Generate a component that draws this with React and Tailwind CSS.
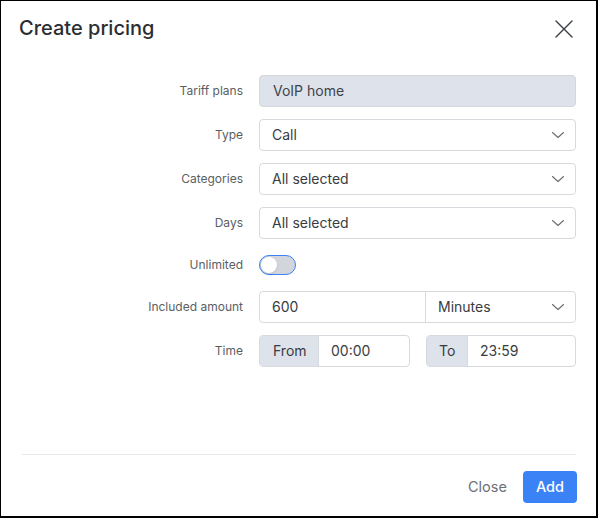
import React from 'react';

const Chevron = () => (
    <svg width="14" height="14" viewBox="0 0 14 14" fill="none" className="shrink-0">
        <path d="M1.5 4.5 L7 9.5 L12.5 4.5" stroke="#6a6e74" strokeWidth="1.1" strokeLinecap="round" strokeLinejoin="round" />
    </svg>
);

const Row = ({ label, children }) => (
    <div className="flex items-center gap-4">
        <div className="w-[222px] text-right text-xs text-[#5a5e63]">{label}</div>
        <div className="flex-1">{children}</div>
    </div>
);

const Select = ({ value }) => (
    <div className="flex h-8 items-center justify-between rounded border border-[#d6dade] bg-white pl-3 pr-[10px] text-sm text-[#383c42]">
        <span>{value}</span>
        <Chevron />
    </div>
);

const App = () => {
    return (
        <div className="h-[518px] w-[598px] border-l border-t border-r-2 border-b-2 border-black bg-white font-[Inter,sans-serif]">
            <div className="flex h-full flex-col px-5">
                {/* header */}
                <div className="flex items-center justify-between pt-[13px]">
                    <h2 className="-ml-[2px] text-[20px] leading-7 font-medium text-[#2a2e33]">Create pricing</h2>
                    <svg width="18" height="18" viewBox="0 0 18 18" className="mr-[3px] mt-[1px]">
                        <path d="M1 1 L17 17 M17 1 L1 17" stroke="#3b3f44" strokeWidth="1.4" strokeLinecap="round" />
                    </svg>
                </div>

                {/* form */}
                <div className="mt-[33px] flex flex-col gap-3">
                    <Row label="Tariff plans">
                        <div className="flex h-8 items-center rounded border border-[#d3d7dc] bg-[#dee2ea] px-[13px] text-sm text-[#40444a]">
                            VoIP home
                        </div>
                    </Row>
                    <Row label="Type">
                        <Select value="Call" />
                    </Row>
                    <Row label="Categories">
                        <Select value="All selected" />
                    </Row>
                    <Row label="Days">
                        <Select value="All selected" />
                    </Row>
                    <div className="flex h-7 items-center gap-4">
                        <div className="w-[222px] text-right text-xs text-[#5a5e63]">Unlimited</div>
                        <div className="flex h-5 w-[37px] items-center rounded-full border border-[#3b82f6] bg-[#d2d6dc] p-[1px]">
                            <div className="h-4 w-4 rounded-full bg-white shadow-sm" />
                        </div>
                    </div>
                    <Row label="Included amount">
                        <div className="flex h-8 rounded border border-[#d6dade] text-sm text-[#383c42]">
                            <div className="flex w-[166px] items-center border-r border-[#d6dade] pl-3">600</div>
                            <div className="flex flex-1 items-center justify-between pl-3 pr-[10px]">
                                <span>Minutes</span>
                                <Chevron />
                            </div>
                        </div>
                    </Row>
                    <Row label="Time">
                        <div className="flex gap-4 text-sm text-[#383c42]">
                            <div className="flex h-8 w-[151px] rounded border border-[#d6dade]">
                                <div className="flex w-[59px] items-center border-r border-[#d6dade] bg-[#dee2ea] pl-[13px]">From</div>
                                <div className="flex flex-1 items-center pl-3">00:00</div>
                            </div>
                            <div className="flex h-8 flex-1 rounded border border-[#d6dade]">
                                <div className="flex w-[41px] items-center border-r border-[#d6dade] bg-[#dee2ea] pl-[12px]">To</div>
                                <div className="flex flex-1 items-center pl-3">23:59</div>
                            </div>
                        </div>
                    </Row>
                </div>

                <div className="flex-1" />

                {/* footer */}
                <div className="mb-[13px] ml-[1px] border-t border-[#e8e9eb] pt-4">
                    <div className="flex items-center justify-end gap-4 pr-0">
                        <button className="text-[14.5px] text-[#6b7078]">Close</button>
                        <button className="-mr-px h-8 rounded bg-[#3b82f6] px-[13px] text-[14.5px] font-medium text-white">Add</button>
                    </div>
                </div>
            </div>
        </div>
    );
};

export default App;
